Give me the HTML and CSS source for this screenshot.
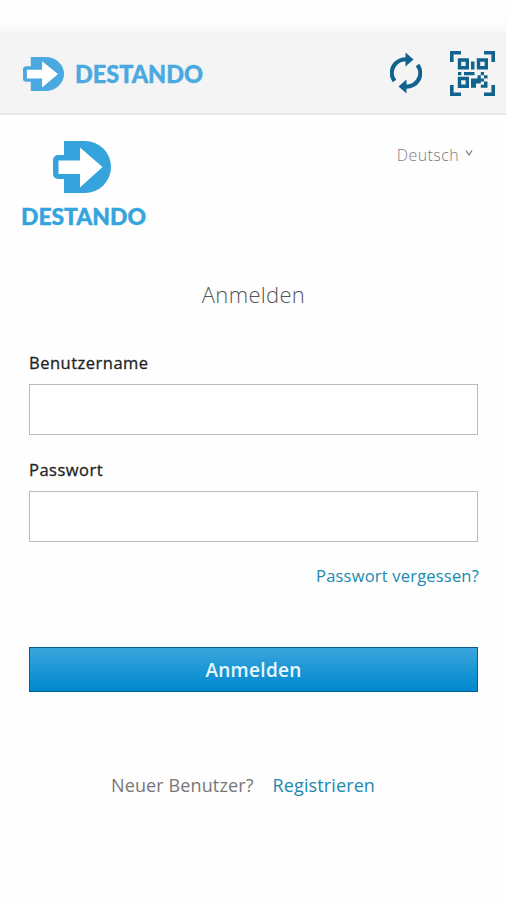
FILE: index.html
```
<!DOCTYPE html>
<html lang="de">
<head>
<meta charset="utf-8">
<title>Destando – Anmelden</title>
<link rel="stylesheet" href="styles.css">
</head>
<body>
<svg class="defs" aria-hidden="true">
  <symbol id="mark" viewBox="0 0 58 52" preserveAspectRatio="none">
    <path fill="currentColor" d="M11 0H32a26 26 0 0 1 0 52H11V38H5a5 5 0 0 1-5-5V19a5 5 0 0 1 5-5h6z"/>
    <path fill="#fff" d="M5.5 19.5H27V6.5L49.5 26 27 46.5V33H5.5z"/>
  </symbol>
</svg>
<div class="status"></div>
<header class="bar">
  <div class="brand">
    <svg class="brand-mark"><use href="#mark"/></svg>
    <svg class="brand-word" viewBox="0 0 136 32"><text x="0" y="24" textLength="128" lengthAdjust="spacingAndGlyphs">DESTANDO</text></svg>
  </div>
  <div class="actions">
    <svg class="refresh" viewBox="-16 -21 32 42">
      <g id="half"><path fill="none" stroke="currentColor" stroke-width="4.2" d="M-11.500 8A13.500 13.500 0 0 1 1-13.500"/><path fill="currentColor" d="M-.5-20.500 7.500-13.500-.5-6.500z"/></g>
      <use href="#half" transform="rotate(180)"/>
    </svg>
    <svg class="qr" viewBox="0 0 45 45">
      <path fill="none" stroke="currentColor" stroke-width="3.6" d="M1.800 11V1.800H11M34 1.800h9.200V11M43.200 34v9.200H34M11 43.200H1.800V34"/>
      <path fill="none" stroke="currentColor" stroke-width="3.4" d="M9.500 9h7.800v7.800H9.500zM28.500 9h7.800v7.800h-7.800zM9.500 27.500h7.800v7.800H9.500z"/>
      <path fill="currentColor" d="M21 10.500h3.500v8H21zM8 21h3.300v3.200H8zM14 21h10.500v3.200H14zM30.800 21H34v3.200h-3.200zM27.500 24.200h3.300v3.200h-3.300zM34 24.200h3.500v3.200H34zM21 27.400h3.500v3.200H21zM24.500 27.400h6.300v5h-6.300zM30.800 27.400H34v3.200h-3.200zM21 30.600h5v6.200h-5zM34 30.600h3.500v6.200H34zM30.800 33.700H34v3.100h-3.200z"/>
    </svg>
  </div>
</header>
<main>
  <div class="top">
    <div class="logo">
      <svg class="logo-mark"><use href="#mark"/></svg>
      <svg class="logo-word" viewBox="0 0 134 32"><text x="0" y="23" textLength="125" lengthAdjust="spacingAndGlyphs">DESTANDO</text></svg>
    </div>
    <div class="lang"><span>Deutsch</span><svg viewBox="0 0 8 6"><path d="M1 .5 4 5 7 .5" fill="none" stroke="currentColor" stroke-width="1.3"/></svg></div>
  </div>
  <h1>Anmelden</h1>
  <form>
    <label for="user">Benutzername</label>
    <input id="user" type="text">
    <label for="pass" class="pass">Passwort</label>
    <input id="pass" type="password">
    <a class="forgot" href="#">Passwort vergessen?</a>
    <button type="button">Anmelden</button>
  </form>
  <p class="register"><span>Neuer Benutzer?</span><a href="#">Registrieren</a></p>
</main>
</body>
</html>
```
FILE: styles.css
```
* { box-sizing: border-box; }
body { margin: 0; height: 900px; overflow: hidden; background: #fefefe; font-family: "Open Sans", sans-serif; }
svg { display: block; }
.defs { width: 0; height: 0; display: block; }
a { color: #2089b0; text-decoration: none; }

.status { height: 32px; background: linear-gradient(#fdfdfd 70%, #f7f7f7); }
.bar { height: 83px; padding: 0 11px 0 23px; display: flex; justify-content: space-between; background: #f4f4f4; border-bottom: 2px solid #e8e8e8; }
.brand { display: flex; align-items: flex-start; gap: 11px; padding-top: 25px; color: #4aa9e0; }
.brand-mark { width: 41px; height: 34px; }
.brand-word { width: 136px; height: 32px; margin-top: 2px; overflow: visible; }
.brand-word text { font: 900 24px Lato, sans-serif; fill: #4aa9e0; stroke: #4aa9e0; stroke-width: .4px; }
.actions { display: flex; align-items: flex-start; gap: 28px; padding-top: 19px; color: #12628e; }
.refresh { width: 32px; height: 42px; margin-top: 1px; }
.qr { width: 45px; height: 45px; }

.top { display: flex; justify-content: space-between; height: 159px; padding: 26px 33px 0 21px; }
.logo { color: #35a4dc; }
.logo-mark { width: 58px; height: 52px; margin-left: 32px; }
.logo-word { width: 134px; height: 32px; margin-top: 9px; overflow: visible; }
.logo-word text { font: 900 23px Lato, sans-serif; fill: #35a4dc; stroke: #35a4dc; stroke-width: .4px; }
.lang { display: flex; align-items: flex-start; gap: 6px; color: #7c7c7c; font-size: 16px; font-weight: 300; line-height: 28px; }
.lang span { letter-spacing: .4px; }
.lang svg { width: 8px; height: 6px; margin-top: 9px; }

h1 { margin: 0; padding-left: 1px; text-align: center; font-size: 22px; font-weight: 300; letter-spacing: .3px; line-height: 40px; color: #555; }
form { display: flex; flex-direction: column; margin: 37px 28px 0 29px; }
label { font-size: 16.500px; font-weight: 500; line-height: 24px; letter-spacing: .5px; color: #222; -webkit-text-stroke: .3px #222; }
.pass { margin-top: 23px; }
input { height: 51px; margin: 9px 0 0; padding: 0 12px; border: 1.5px solid #bbb; border-radius: 0; background: #fff; font: inherit; outline: 0; }
.forgot { align-self: flex-end; margin: 22px -1px 0 0; font-size: 16.500px; line-height: 24px; letter-spacing: .2px; }
button { height: 45px; margin-top: 59px; padding: 0; border: 1px solid #075d94; border-radius: 0; background: linear-gradient(#39a5dc, #0088ce); color: #e8f7ff; font: 600 19px "Open Sans", sans-serif; letter-spacing: .3px; }
.register { display: flex; gap: 19px; margin: 80px 0 0 111px; font-size: 18px; line-height: 26px; letter-spacing: .12px; white-space: nowrap; color: #777; }
```
